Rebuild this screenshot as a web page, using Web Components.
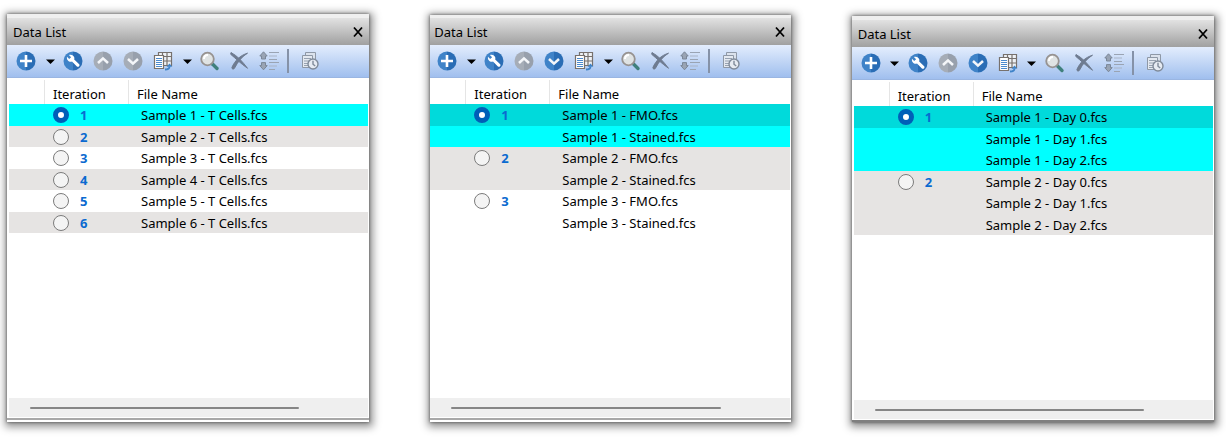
<!DOCTYPE html>
<html lang="en">
<head>
<meta charset="utf-8">
<title>Data List</title>
<style>
  body {
    margin: 0;
    background-color: white;
    color: black;
    font-family: "Noto Sans", "Open Sans", sans-serif;
    font-size: 13px;
  }
  main {
    display: grid;
    grid-template-columns: repeat(3, 1fr);
    gap: 60px;
    box-sizing: border-box;
    min-height: 100vh;
    padding: 14px 12px 23px 7px;
  }
  data-list.flush {
    --inset: 0px;
    --strip: 3px;
    margin: 1px 1px 0;
  }
  data-list.low {
    --foot: 0px;
    --line: #7f7f7f;
    margin-top: 2px;
  }
</style>
</head>
<body>
<main>
  <data-list>
    <file-table slot="files" data-groups='[["Sample 1 - T Cells.fcs"],["Sample 2 - T Cells.fcs"],["Sample 3 - T Cells.fcs"],["Sample 4 - T Cells.fcs"],["Sample 5 - T Cells.fcs"],["Sample 6 - T Cells.fcs"]]'></file-table>
  </data-list>
  <data-list class="flush" can-move-down>
    <file-table slot="files" data-groups='[["Sample 1 - FMO.fcs","Sample 1 - Stained.fcs"],["Sample 2 - FMO.fcs","Sample 2 - Stained.fcs"],["Sample 3 - FMO.fcs","Sample 3 - Stained.fcs"]]'></file-table>
  </data-list>
  <data-list class="low" can-move-down>
    <file-table slot="files" data-groups='[["Sample 1 - Day 0.fcs","Sample 1 - Day 1.fcs","Sample 1 - Day 2.fcs"],["Sample 2 - Day 0.fcs","Sample 2 - Day 1.fcs","Sample 2 - Day 2.fcs"]]'></file-table>
  </data-list>
</main>
<script>
const disc = (left, right, mark) => `
  <path d="M10 .5a9.5 9.5 0 0 0 0 19z" fill="${left}"/>
  <path d="M10 .5a9.5 9.5 0 0 1 0 19z" fill="${right}"/>
  ${mark}`;

const chevron = (d) =>
  `<path d="${d}" fill="none" stroke="#f4f6f9" stroke-width="2.6"/>`;

const icons = {
  add: disc("#3f83c8", "#2a6db5", `<path d="M10 4v12M4 10h12" stroke="#fff" stroke-width="2.6"/>`),
  setup: disc("#3f83c8", "#2a6db5", `
    <path d="M4 5.800l2.200 2.100 1.900-1.700-2.200-2.200c2.200-.8 4.900.2 5.400 2.600.1.700.1 1.200-.1 1.800l5 4.800c1.200 1.300-1 3.500-2.300 2.300l-4.900-4.900c-2.700.9-5.700-1.300-5-4.800z" fill="#fff"/>`),
  up: disc("#a6adb7", "#98a0ac", chevron("M5 12l5-4.600 5 4.600")),
  down: disc("#a6adb7", "#98a0ac", chevron("M5 8l5 4.600 5-4.600")),
  downOn: disc("#3f83c8", "#2a6db5", chevron("M5 8l5 4.600 5-4.600")),
  caret: `<path d="M6 8.500h9L10.500 13z" fill="#000"/>`,
  copy: `
    <path d="M5.500 1.500h13v13h-13z" fill="#eef1f5"/>
    <path d="M5.500 1.500h13v13h-13zM5.500 5.500h13M5.500 10h13M9.500 1.500v13M14 1.500v13" fill="none" stroke="#77716d" stroke-width="1.200"/>
    <path d="M1.500 4.500h9v13h-9z" fill="#fff" stroke="#77716d" stroke-width="1.200"/>
    <path d="M3 7.500h6M3 9.500h6M3 11.500h6M3 13.500h6M3 15.500h6" stroke="#4b8ace"/>
    <path d="M12 18.500c3 0 4.500-.8 4.500-3" fill="none" stroke="#3f83c8" stroke-width="1.800"/>
    <path d="M13.500 15.800h5.800l-2.800-3.200z" fill="#3f83c8"/>`,
  find: `
    <path d="M12.500 13l4.500 4.500" stroke="#3f807c" stroke-width="3.400" stroke-linecap="round"/>
    <circle cx="7.500" cy="8" r="6.300" fill="#dfe3e3" stroke="#979391" stroke-width="1.800"/>
    <path d="M4 8c0-2.400 1.600-4 4-4" fill="none" stroke="#fff" stroke-width="2"/>`,
  remove: `
    <path d="M1 1.500c6.500 3.500 11.500 9 16.500 15.800-7-5-11.500-9.500-16.800-14zM17.500 2.200C12 5.500 8 10.500 4.300 17.500c-1 1-2.500.6-2.400-1C5 9.500 10 4.500 17.500 2.200z" fill="#6e7b90" stroke="#6e7b90"/>`,
  order: `
    <path d="M3.500.8L7.200 5H5.500v3h-4V5H-.2zM3.500 18.800l3.700-4.200H5.500v-3h-4v3H-.2z" fill="#99a4b4" stroke="#7b8798"/>
    <path d="M9 1.500h10M9 8.500h8M9 11.500h10M9 18.500h6" stroke="#9aa4b3" stroke-width="1.200"/>
    <path d="M9 5h8M9 15h8" stroke="#a9b4c5" stroke-width="1.200"/>`,
  history: `
    <path d="M5.500 1.500h10v12h-10z" fill="#dbe2ec" stroke="#8e98a6"/>
    <path d="M2.500 4.500h10v12h-10z" fill="#e4e9f0" stroke="#8e98a6"/>
    <path d="M4 7.500h7M4 10h5M4 12.500h4M4 14.500h4" stroke="#97a2b1"/>
    <circle cx="13" cy="13" r="5" fill="#e6ebf2" stroke="#7f8a99" stroke-width="1.400"/>
    <path d="M13 9.800v3.400l2.200 1.800" fill="none" stroke="#7f8a99" stroke-width="1.400"/>`,
  close: `<path d="M6 5.500l8 9M14 5.500l-8 9" stroke="#000" stroke-width="1.800"/>`,
};

class IconButton extends HTMLElement {
  constructor() {
    super();
    this.attachShadow({ mode: "open" });
  }
  connectedCallback() {
    this.shadowRoot.innerHTML = `<style>
      :host {
        display: block;
        flex: none;
        width: 30px;
      }
      :host([narrow]) {
        width: 17px;
      }
      button {
        display: flex;
        justify-content: center;
        width: 100%;
        padding: 0;
        border: 0;
        background: none;
      }
      svg {
        flex: none;
        width: 20px;
        height: 20px;
        overflow: visible;
      }
    </style>
    <button type="button" aria-label="${this.getAttribute("label")}">
      <svg viewBox="0 0 20 20" aria-hidden="true">${icons[this.getAttribute("icon")]}</svg>
    </button>`;
  }
}
customElements.define("icon-button", IconButton);

class FileTable extends HTMLElement {
  constructor() {
    super();
    this.attachShadow({ mode: "open" });
  }
  connectedCallback() {
    const groups = JSON.parse(this.dataset.groups);
    this.shadowRoot.innerHTML = `<style>
      :host {
        display: block;
      }
      table {
        width: 100%;
        table-layout: fixed;
        border-collapse: separate;
        border-spacing: 0;
      }
      .lead {
        width: 36px;
      }
      .iteration {
        width: 84px;
      }
      th, td {
        box-sizing: border-box;
        padding: 0;
        text-align: left;
        white-space: nowrap;
        font-weight: normal;
        line-height: 16px;
      }
      thead th, thead td {
        height: 24px;
        border-right: 1px solid #e5e5e5;
        padding: 4px 0 0 8px;
      }
      thead th:last-child {
        border-right: 0;
      }
      tbody td {
        height: 22px;
      }
      tbody td:last-child {
        padding-left: 12px;
      }
      /* rows alternate between 22 and 21 pixels */
      tr.even td {
        height: 21px;
      }
      tbody:nth-of-type(even) {
        background-color: #e6e4e3;
      }
      tbody.selected {
        background-color: #00ffff;
      }
      tbody.selected.multiple tr:first-child {
        background-color: #00dadb;
      }
      label {
        display: flex;
        align-items: center;
        gap: 11px;
        padding-left: 8px;
        color: #0b6ad0;
        font-weight: bold;
      }
      input {
        appearance: none;
        box-sizing: border-box;
        width: 16px;
        height: 16px;
        margin: 0;
        border: 1px solid #7b7b7b;
        border-radius: 50%;
        background-color: #f4f4f4;
      }
      input:checked {
        border: 5px solid #005fb8;
        background-color: white;
      }
    </style>
    <table>
      <colgroup><col class="lead"><col class="iteration"><col></colgroup>
      <thead>
        <tr><td></td><th scope="col">Iteration</th><th scope="col">File Name</th></tr>
      </thead>
      ${this.renderGroups(groups)}
    </table>`;
  }
  renderGroups(groups) {
    let count = 0;
    return groups
      .map((files, i) => {
        const classes = [
          i === 0 ? "selected" : "",
          files.length > 1 ? "multiple" : "",
        ].join(" ");
        const rows = files.map((file, j) => {
          count++;
          const radio = `<label><input type="radio" name="iteration"${i === 0 ? " checked" : ""}>${i + 1}</label>`;
          return `<tr${count % 2 ? "" : ' class="even"'}><td></td><td>${j === 0 ? radio : ""}</td><td>${file}</td></tr>`;
        });
        return `<tbody class="${classes}">${rows.join("")}</tbody>`;
      })
      .join("");
  }
}
customElements.define("file-table", FileTable);

class DataList extends HTMLElement {
  constructor() {
    super();
    this.attachShadow({ mode: "open" });
  }
  connectedCallback() {
    const down = this.hasAttribute("can-move-down") ? "downOn" : "down";
    this.shadowRoot.innerHTML = `<style>
      :host {
        display: flex;
        flex-direction: column;
        min-width: 0;
        background-color: white;
        box-shadow: 0 0 3px 0 rgba(0, 0, 0, 0.55), 1px 2px 8px 3px rgba(0, 0, 0, 0.42);
      }
      header {
        display: flex;
        align-items: center;
        justify-content: space-between;
        height: 27px;
        border-top: var(--strip, 4px) solid #efefef;
        padding-left: calc(4px + var(--inset, 2px));
        background: linear-gradient(#e2e2e2, #a0a0a0) padding-box;
      }
      h2 {
        margin: 0;
        font-size: 13px;
        font-weight: normal;
        line-height: 16px;
      }
      header icon-button {
        width: 22px;
      }
      nav {
        display: flex;
        align-items: center;
        height: 32px;
        overflow: hidden;
        padding-left: calc(2px + var(--inset, 2px));
        border-bottom: 1px solid #9ab6e2;
        background: linear-gradient(#e3edfd, #a0bfee);
      }
      .separator {
        flex: none;
        width: 2px;
        height: 24px;
        margin: 0 6px 0 2px;
        background-color: #8592a8;
      }
      .files {
        flex: 1;
        padding: 2px 1px 0 var(--inset, 2px);
      }
      .scroll {
        height: 19px;
        display: flex;
        align-items: center;
        margin: 0 1px 1px var(--inset, 2px);
        background-color: #efefef;
      }
      .thumb {
        width: 75%;
        height: 2px;
        margin-left: 21px;
        border-radius: 1px;
        background-color: #868686;
      }
      footer {
        height: var(--foot, 2px);
        border-top: 2px solid var(--line, #a8a8a8);
      }
    </style>
    <header>
      <h2>Data List</h2>
      <icon-button icon="close" label="Close"></icon-button>
    </header>
    <nav aria-label="Data list">
      <icon-button icon="add" label="Add"></icon-button>
      <icon-button icon="caret" label="Add options" narrow></icon-button>
      <icon-button icon="setup" label="Set up"></icon-button>
      <icon-button icon="up" label="Move up"></icon-button>
      <icon-button icon="${down}" label="Move down"></icon-button>
      <icon-button icon="copy" label="Copy"></icon-button>
      <icon-button icon="caret" label="Copy options" narrow></icon-button>
      <icon-button icon="find" label="Find"></icon-button>
      <icon-button icon="remove" label="Remove"></icon-button>
      <icon-button icon="order" label="Order"></icon-button>
      <span class="separator"></span>
      <icon-button icon="history" label="History"></icon-button>
    </nav>
    <div class="files"><slot name="files"></slot></div>
    <div class="scroll"><div class="thumb"></div></div>
    <footer></footer>`;
  }
}
customElements.define("data-list", DataList);
</script>
</body>
</html>
